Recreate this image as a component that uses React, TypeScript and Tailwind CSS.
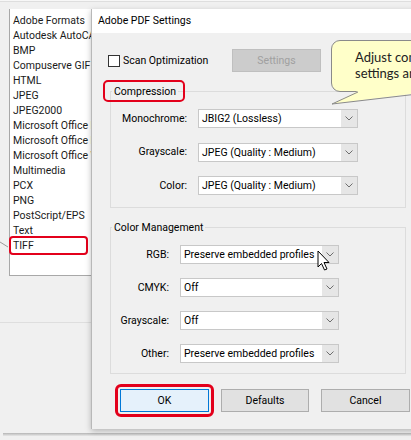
import React from "react";

const formats = [
  "Adobe Formats",
  "Autodesk AutoCAD",
  "BMP",
  "Compuserve GIF",
  "HTML",
  "JPEG",
  "JPEG2000",
  "Microsoft Office Excel",
  "Microsoft Office PowerPoint",
  "Microsoft Office Word",
  "Multimedia",
  "PCX",
  "PNG",
  "PostScript/EPS",
  "Text",
  "TIFF",
];

function Chevron() {
  return (
    <svg width="8" height="5" viewBox="0 0 8 5">
      <polyline points="0.5,0.5 4,4 7.5,0.5" fill="none" stroke="#6e6e6e" strokeWidth="1" />
    </svg>
  );
}

function Combo({ value, width }: { value: string; width: string }) {
  return (
    <div className={`flex h-[19px] ${width} border border-[#c8c8c8] bg-white`}>
      <div className="flex-1 overflow-hidden whitespace-nowrap pl-[3px] leading-[17px]">{value}</div>
      <div className="flex w-[16px] items-center justify-center bg-[#e6e6e6]">
        <Chevron />
      </div>
    </div>
  );
}

function Row({ label, value, labelW, comboW }: { label: string; value: string; labelW: string; comboW: string }) {
  return (
    <div className="flex items-center">
      <div className={`${labelW} text-right`}>{label}</div>
      <div className="ml-[11px]">
        <Combo value={value} width={comboW} />
      </div>
    </div>
  );
}

export default function App() {
  return (
    <div className="relative h-[440px] w-[411px] overflow-hidden bg-[#f0f0f0] font-['Roboto',sans-serif] text-[10.5px] text-black">
      <div className="h-[2px] border-b border-[#dedede] bg-[#f7f7f7]" />

      {/* file type list behind the dialog */}
      <div className="ml-[9px] mt-[7px] h-[267px] w-[100px] border-b border-l border-[#a8a8a8] bg-white pt-[4px]">
        {formats.map((f) => (
          <div key={f} className="relative h-[15px] whitespace-nowrap pl-[3px] leading-[15px] text-[#1a1a1a]">
            {f}
            {f === "TIFF" && (
              <span className="absolute bottom-[-2px] left-[-1px] right-[21px] top-[-2px] rounded-[4px] border-2 border-[#e3001b]" />
            )}
          </div>
        ))}
      </div>
      <div className="mt-[46px] h-px w-[91px] bg-[#dedede]" />

      <svg className="absolute left-0 top-[240px]" width="9" height="9">
        <line x1="0" y1="2" x2="8" y2="7" stroke="#9a9a9a" strokeWidth="1" />
      </svg>

      {/* bottom edge of the window behind */}
      <div className="absolute bottom-[4px] left-[3px] right-0 h-[3px] bg-gradient-to-b from-[#b5b5b5] to-[#e8e8e8]" />

      {/* dialog */}
      <div className="absolute left-[91px] top-[9px] h-[420px] w-[340px] border-l border-[#b8b8b8] bg-[#f0f0f0] shadow-[0_2px_6px_rgba(0,0,0,0.25)]">
        <div className="flex h-[24px] items-center bg-white pl-[6px]">Adobe PDF Settings</div>

        <div className="mt-[16px] flex items-center pl-[16px]">
          <div className="flex w-[124px] items-center">
            <div className="h-[12px] w-[12px] border border-[#333] bg-white" />
            <span className="ml-[3px]">Scan Optimization</span>
          </div>
          <div className="flex h-[23px] w-[89px] items-center justify-center border border-[#bfbfbf] bg-[#cccccc] text-[#a0a0a0]">
            Settings
          </div>
        </div>

        <fieldset className="ml-[18px] mt-[12px] w-[296px] border border-[#dcdcdc] pb-[12px] pt-[10px]">
          <legend className="relative ml-[1px] px-[2px] leading-[15px]">
            Compression
            <span className="absolute bottom-[-3px] left-[-9px] right-[-7px] top-[-4px] rounded-[5px] border-2 border-[#e3001b]" />
          </legend>
          <div className="flex flex-col gap-[14.5px]">
            <Row label="Monochrome:" value="JBIG2 (Lossless)" labelW="w-[76px]" comboW="w-[160px]" />
            <Row label="Grayscale:" value="JPEG (Quality : Medium)" labelW="w-[76px]" comboW="w-[160px]" />
            <Row label="Color:" value="JPEG (Quality : Medium)" labelW="w-[76px]" comboW="w-[160px]" />
          </div>
        </fieldset>

        <fieldset className="ml-[18px] mt-[12px] w-[296px] border border-[#dcdcdc] pb-[10px] pt-[10px]">
          <legend className="ml-[1px] px-[2px] leading-[15px]">Color Management</legend>
          <div className="flex flex-col gap-[14px]">
            <Row label="RGB:" value="Preserve embedded profiles" labelW="w-[58px]" comboW="w-[159px]" />
            <Row label="CMYK:" value="Off" labelW="w-[58px]" comboW="w-[159px]" />
            <Row label="Grayscale:" value="Off" labelW="w-[58px]" comboW="w-[159px]" />
            <Row label="Other:" value="Preserve embedded profiles" labelW="w-[58px]" comboW="w-[159px]" />
          </div>
        </fieldset>

        <div className="mt-[15px] flex gap-[12px] pl-[28px]">
          <div className="relative">
            <div className="flex h-[23px] w-[89px] items-center justify-center border border-[#0078d7] bg-[#e5f1fb]">OK</div>
            <span className="absolute inset-[-5px] rounded-[6px] border-[3px] border-[#e3001b]" />
          </div>
          <div className="flex h-[23px] w-[88px] items-center justify-center border border-[#adadad] bg-[#e1e1e1]">Defaults</div>
          <div className="flex h-[23px] w-[89px] items-center justify-center border border-[#adadad] bg-[#e1e1e1]">Cancel</div>
        </div>
      </div>

      {/* callout bubble */}
      <div className="absolute left-[331px] top-[40px] h-[52px] w-[140px] rounded-[9px] border border-[#8a8a8a] bg-[#ffffc9] pl-[23px] pt-[8px] font-['Lato',sans-serif] text-[13px] leading-[16px] text-[#222]">
        Adjust compression settings and output
      </div>
      <svg className="absolute left-[330px] top-[88px]" width="110" height="20">
        <polygon points="28,3 2,16 105,3" fill="#ffffc9" />
        <polyline points="28,4 2,16 105,4" fill="none" stroke="#8a8a8a" strokeWidth="1" />
      </svg>

      {/* mouse pointer */}
      <svg className="absolute left-[317px] top-[250px]" width="14" height="21" viewBox="0 0 14 21">
        <path d="M1,1 L1,17 L4.5,13.5 L7.5,20 L10,19 L7,12.5 L12,12.5 Z" fill="#fff" stroke="#000" strokeWidth="1" strokeLinejoin="round" />
      </svg>
    </div>
  );
}
